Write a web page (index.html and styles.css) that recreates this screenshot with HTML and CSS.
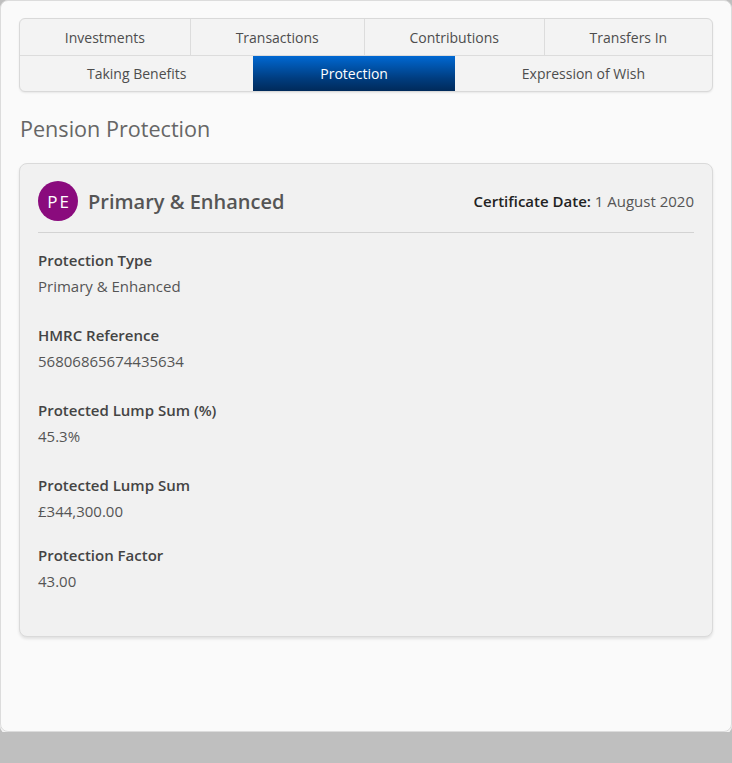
FILE: index.html
```html
<!DOCTYPE html>
<html>
<head>
<meta charset="utf-8">
<link rel="stylesheet" href="styles.css">
</head>
<body>
<div class="panel">
  <nav class="tabs">
    <div class="tab-row">
      <a class="tab">Investments</a>
      <a class="tab">Transactions</a>
      <a class="tab">Contributions</a>
      <a class="tab">Transfers In</a>
    </div>
    <div class="tab-row">
      <a class="tab">Taking Benefits</a>
      <a class="tab active">Protection</a>
      <a class="tab">Expression of Wish</a>
    </div>
  </nav>
  <h1 class="page-title">Pension Protection</h1>
  <section class="card">
    <header class="card-head">
      <div class="avatar">PE</div>
      <h2 class="card-title">Primary &amp; Enhanced</h2>
      <div class="cert"><strong>Certificate Date:</strong> 1 August 2020</div>
    </header>
    <div class="fields">
      <div class="field">
        <div class="label">Protection Type</div>
        <div class="value">Primary &amp; Enhanced</div>
      </div>
      <div class="field">
        <div class="label">HMRC Reference</div>
        <div class="value">56806865674435634</div>
      </div>
      <div class="field">
        <div class="label">Protected Lump Sum (%)</div>
        <div class="value">45.3%</div>
      </div>
      <div class="field tight">
        <div class="label">Protected Lump Sum</div>
        <div class="value">£344,300.00</div>
      </div>
      <div class="field">
        <div class="label">Protection Factor</div>
        <div class="value">43.00</div>
      </div>
    </div>
  </section>
</div>
</body>
</html>
```
FILE: styles.css
```css
* { box-sizing: border-box; }
html, body {
  margin: 0;
  padding: 0;
  background: #bfbfbf;
  font-family: "Open Sans", "Liberation Sans", sans-serif;
}
.panel {
  width: 732px;
  height: 732px;
  background: #fafafa;
  border: 1px solid #dcdcdc;
  border-radius: 8px;
  padding: 17px 18px 0 18px;
  box-shadow: 0 2px 0 #f4f4f4;
}
.tabs {
  border: 1px solid #d9d9d9;
  border-radius: 6px;
  background: #f3f3f3;
  box-shadow: 0 1px 2px rgba(0,0,0,0.08);
  overflow: hidden;
}
.tab-row {
  display: flex;
  height: 36px;
}
.tab-row + .tab-row {
  border-top: 1px solid #dcdcdc;
}
.tab {
  flex: 1 1 auto;
  display: flex;
  align-items: center;
  justify-content: center;
  font-size: 14px;
  font-weight: 500;
  color: #4d4d4d;
  white-space: nowrap;
}
.tab-row:first-child .tab + .tab {
  border-left: 1px solid #dcdcdc;
}
.tab.active {
  background: linear-gradient(to bottom, #0068d2 0%, #003c7e 65%, #002a5a 100%);
  color: #fff;
  font-weight: 500;
}
.page-title {
  margin: 22px 0 0 1px;
  font-size: 21.6px;
  line-height: 30px;
  font-weight: 400;
  color: #666;
}
.card {
  margin-top: 19px;
  background: #f1f1f1;
  border: 1px solid #dadada;
  border-radius: 8px;
  box-shadow: 0 2px 3px rgba(0,0,0,0.1);
  padding: 17px 18px 45px 18px;
}
.card-head {
  display: flex;
  align-items: center;
  padding-bottom: 11px;
  border-bottom: 1px solid #d3d3d3;
}
.avatar {
  width: 40px;
  height: 40px;
  border-radius: 50%;
  background: #8a0b7d;
  color: #fff;
  display: flex;
  align-items: center;
  justify-content: center;
  font-size: 17px;
  letter-spacing: 2px;
  padding-left: 2px;
}
.card-title {
  margin: 0 0 0 10px;
  font-size: 20px;
  font-weight: 600;
  color: #555;
  flex: 1;
}
.cert {
  font-size: 15px;
  color: #555;
}
.cert strong {
  color: #222;
  font-weight: 600;
}
.fields {
  padding-top: 17px;
}
.field + .field {
  margin-top: 29px;
}
.field.tight + .field {
  margin-top: 24px;
}
.label {
  font-size: 15px;
  line-height: 20px;
  font-weight: 600;
  color: #444;
}
.value {
  margin-top: 6px;
  font-size: 15px;
  line-height: 20px;
  color: #555;
}
```
